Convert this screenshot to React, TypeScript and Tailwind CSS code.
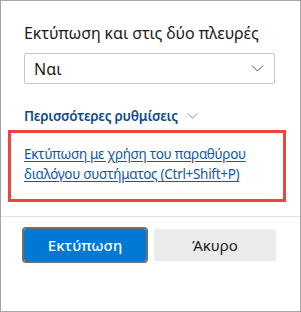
function Chevron({ className }: { className: string }) {
  return (
    <svg className={className} viewBox="0 0 12 7" fill="none">
      <path d="M0.5 0.5 L6 6 L11.5 0.5" stroke="currentColor" strokeWidth="1" />
    </svg>
  );
}

export default function App() {
  return (
    <div className="flex h-[312px] w-[301px] flex-col border border-[#a5a5a5] bg-white font-['Noto_Sans',sans-serif] text-[#1b1b1b]">
      <div className="px-[23px] pt-[21px]">
        <h2 className="text-[16px] leading-[22px] font-normal tracking-[-0.1px]">
          Εκτύπωση και στις δύο πλευρές
        </h2>
        <button className="mt-[9px] flex h-[31px] w-[251px] items-center justify-between rounded-[2px] border border-[#c6c6c6] pl-[9px] pr-[10px] text-[16px] leading-none text-[#1b1b1b]">
          <span>Ναι</span>
          <Chevron className="h-[7px] w-[13px] text-[#555]" />
        </button>
        <button className="mt-[22px] flex items-center gap-[9px] text-[13.5px] leading-[20px] font-semibold tracking-[-0.2px] text-[#0e4c8d]">
          Περισσότερες ρυθμίσεις
          <Chevron className="h-[6px] w-[11px] text-[#5b7fa6]" />
        </button>
      </div>

      <div className="mt-[4px] ml-[7px] mr-[14px] border-[3px] border-[#ee4343] pl-[13px] pr-[4px] pt-[11px] pb-[15px]">
        <a
          href="#"
          className="block text-[13.5px] leading-[20px] tracking-[-0.3px] text-[#105aa3] underline underline-offset-[2px]"
        >
          Εκτύπωση με χρήση του παραθύρου διαλόγου συστήματος (Ctrl+Shift+P)
        </a>
      </div>

      <div className="mt-[14px] flex gap-[8px] border-t border-[#e3e3e3] px-[23px] pt-[12px]">
        <button className="h-[32px] w-[122px] rounded-[2px] bg-[#0078d4] text-[15px] font-medium text-white outline-2 outline-[#6f6f6f]">
          Εκτύπωση
        </button>
        <button className="h-[32px] w-[122px] rounded-[2px] bg-[#ebebeb] text-[15px] text-[#222]">
          Άκυρο
        </button>
      </div>
    </div>
  );
}
